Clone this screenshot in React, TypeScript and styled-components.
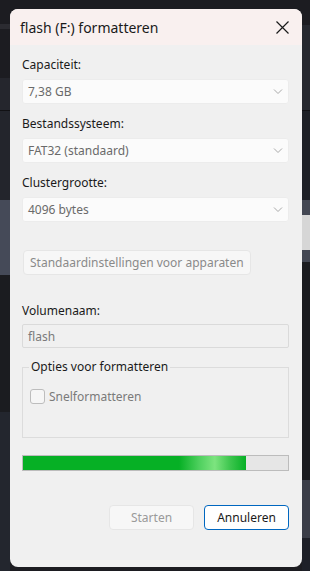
import React from "react";
import styled, { createGlobalStyle } from "styled-components";

const GlobalStyle = createGlobalStyle`
  html, body {
    margin: 0;
    padding: 0;
    background: #1c1c21;
  }
  * {
    box-sizing: border-box;
  }
`;

const leftStrip = `linear-gradient(to bottom,
  #1c1c21 0px, #1c1c21 24px, #2b2b31 24px, #2b2b31 29px,
  #1c1c21 29px, #1c1c21 78px, #25262d 78px, #25262d 110px,
  #111114 110px, #111114 111px, #23252c 111px, #23252c 200px,
  #454a58 200px, #454a58 275px, #1b1c20 275px, #1b1c20 412px,
  #23262e 412px, #23262e 571px)`;

const rightStrip = `linear-gradient(to bottom,
  #1c1c21 0px, #1c1c21 25px, #26282f 25px, #26282f 110px,
  #111114 110px, #111114 111px, #1e2026 111px, #1e2026 200px,
  #434753 200px, #434753 215px, #d6d6d6 215px, #d6d6d6 250px,
  #434753 250px, #434753 262px, #1b1c20 262px, #1b1c20 480px,
  #3b3e48 480px, #3b3e48 538px, #1e2028 538px, #1e2028 571px)`;

const Backdrop = styled.div`
  width: 310px;
  height: 571px;
  padding: 9px 8px 4px 10px;
  background-color: #1c1c21;
  background-image: ${leftStrip}, ${rightStrip};
  background-size: 10px 100%, 8px 100%;
  background-position: left top, right top;
  background-repeat: no-repeat;
  font-family: "Noto Sans", "Open Sans", sans-serif;
`;

const Window = styled.div`
  width: 292px;
  height: 558px;
  border-radius: 8px;
  overflow: hidden;
  background: #f0f0f0;
  display: flex;
  flex-direction: column;
  color: #1a1a1a;
`;

const TitleBar = styled.div`
  height: 36px;
  flex: none;
  background: #f9f0ef;
  display: flex;
  align-items: center;
  justify-content: space-between;
  padding-left: 10px;
`;

const Title = styled.span`
  font-size: 14px;
  line-height: 20px;
  color: #1a1a1a;
  margin-top: 1px;
`;

const CloseButton = styled.div`
  width: 40px;
  height: 36px;
  display: flex;
  align-items: center;
  justify-content: center;
`;

const Body = styled.div`
  flex: 1;
  display: flex;
  flex-direction: column;
  padding: 12px 13px 0 12px;
`;

const Label = styled.div<{ $gap?: number }>`
  font-size: 12px;
  line-height: 16px;
  margin-top: ${(p) => p.$gap ?? 0}px;
  color: #1a1a1a;
`;

const Combo = styled.div`
  margin-top: 6px;
  height: 25px;
  background: #fbfbfb;
  border: 1px solid #ececec;
  border-radius: 3px;
  display: flex;
  align-items: center;
  justify-content: space-between;
  padding: 0 5px 0 5px;
  font-size: 12px;
  color: #6a6a6a;
`;

const TextField = styled.div`
  margin-top: 5px;
  height: 24px;
  background: #f0f0f0;
  border: 1px solid #dadada;
  border-radius: 2px;
  display: flex;
  align-items: center;
  padding: 0 5px;
  font-size: 12px;
  color: #7a7a7a;
`;

const SmallButton = styled.div<{ $primary?: boolean }>`
  height: 25px;
  border-radius: 4px;
  display: flex;
  align-items: center;
  justify-content: center;
  font-size: 12px;
  background: ${(p) => (p.$primary ? "#ffffff" : "#f7f7f7")};
  border: 1px solid ${(p) => (p.$primary ? "#0067c0" : "#e6e6e6")};
  color: ${(p) => (p.$primary ? "#1a1a1a" : "#9a9a9a")};
`;

const DefaultsButton = styled(SmallButton)`
  margin-top: 28px;
  align-self: flex-start;
  padding: 0 6px;
  margin-left: 1px;
  color: #8a8a8a;
`;

const Group = styled.fieldset`
  margin: 11px 0 0 0;
  padding: 0 6px;
  height: 79px;
  border: 1px solid #dcdcdc;
  border-radius: 0;
  min-width: 0;
`;

const Legend = styled.legend`
  padding: 0 2px;
  font-size: 12px;
  line-height: 16px;
  color: #1a1a1a;
`;

const CheckRow = styled.div`
  display: flex;
  align-items: center;
  gap: 4px;
  margin-top: 13px;
  margin-left: 1px;
  font-size: 12px;
  color: #7a7a7a;
`;

const CheckBox = styled.div`
  width: 15px;
  height: 15px;
  border: 1px solid #bdbdbd;
  border-radius: 3px;
  background: #f6f6f6;
`;

const Progress = styled.div`
  margin-top: 17px;
  height: 16px;
  border: 1px solid #bcbcbc;
  background: #e6e6e6;
`;

const ProgressFill = styled.div`
  height: 100%;
  background: linear-gradient(
    to right,
    #06b025 0%,
    #06b025 70%,
    #4ed05e 79%,
    #7de47f 86%,
    #3cc54d 93%,
    #06b025 100%
  );
`;

const Footer = styled.div`
  margin-top: 34px;
  display: flex;
  justify-content: flex-end;
  gap: 10px;
`;

const FooterButton = styled(SmallButton)`
  width: 85px;
`;

const Chevron = () => (
  <svg width="10" height="6" viewBox="0 0 10 6" fill="none">
    <path d="M1 0.5 L5 4.5 L9 0.5" stroke="#a8a8a8" strokeWidth="1" />
  </svg>
);

const CloseIcon = () => (
  <svg width="13" height="13" viewBox="0 0 13 13" fill="none">
    <path d="M0.5 0.5 L12.5 12.5 M12.5 0.5 L0.5 12.5" stroke="#1a1a1a" strokeWidth="1.2" />
  </svg>
);

const fields = [
  { label: "Capaciteit:", value: "7,38 GB" },
  { label: "Bestandssysteem:", value: "FAT32 (standaard)" },
  { label: "Clustergrootte:", value: "4096 bytes" },
];

export default function App() {
  const progress = 84;
  return (
    <>
      <GlobalStyle />
      <Backdrop>
        <Window>
          <TitleBar>
            <Title>flash (F:) formatteren</Title>
            <CloseButton>
              <CloseIcon />
            </CloseButton>
          </TitleBar>
          <Body>
            {fields.map((f, i) => (
              <React.Fragment key={f.label}>
                <Label $gap={i === 0 ? 0 : 12}>{f.label}</Label>
                <Combo>
                  <span>{f.value}</span>
                  <Chevron />
                </Combo>
              </React.Fragment>
            ))}
            <DefaultsButton>Standaardinstellingen voor apparaten</DefaultsButton>
            <Label $gap={28}>Volumenaam:</Label>
            <TextField>flash</TextField>
            <Group>
              <Legend>Opties voor formatteren</Legend>
              <CheckRow>
                <CheckBox />
                <span>Snelformatteren</span>
              </CheckRow>
            </Group>
            <Progress>
              <ProgressFill style={{ width: `${progress}%` }} />
            </Progress>
            <Footer>
              <FooterButton>Starten</FooterButton>
              <FooterButton $primary>Annuleren</FooterButton>
            </Footer>
          </Body>
        </Window>
      </Backdrop>
    </>
  );
}
